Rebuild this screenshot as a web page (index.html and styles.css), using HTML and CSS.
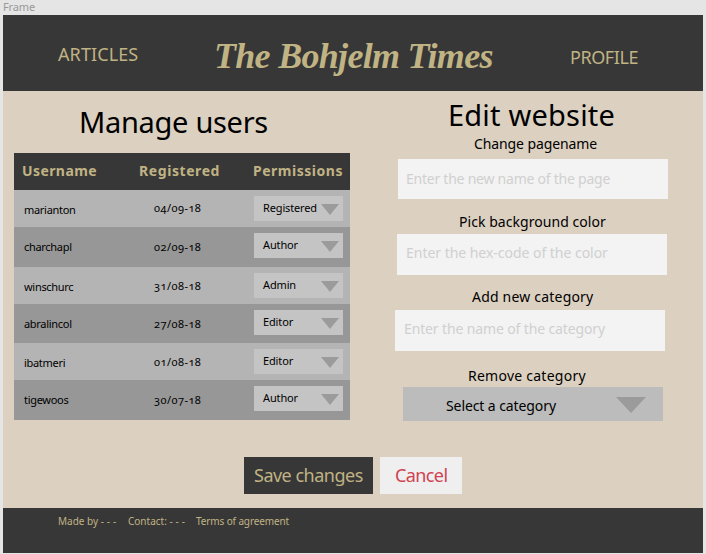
FILE: index.html
```
<!DOCTYPE html>
<html lang="en">
<head>
<meta charset="utf-8">
<title>The Bohjelm Times</title>
<link rel="stylesheet" href="styles.css">
</head>
<body>
<div class="frame-label">Frame</div>
<div class="frame">
  <header class="top">
    <a class="nav articles">ARTICLES</a>
    <div class="brand">The Bohjelm Times</div>
    <a class="nav profile">PROFILE</a>
  </header>
  <main>
    <div class="columns">
      <section class="users">
        <h1 class="users-title">Manage users</h1>
        <div class="thead"><span class="h-user">Username</span><span class="h-reg">Registered</span><span class="h-perm">Permissions</span></div>
        <div class="row r1"><span class="name">marianton</span><span class="date">04/09-18</span><div class="pick">Registered<i class="arrow"></i></div></div>
        <div class="row alt"><span class="name">charchapl</span><span class="date">02/09-18</span><div class="pick">Author<i class="arrow"></i></div></div>
        <div class="row r3"><span class="name">winschurc</span><span class="date">31/08-18</span><div class="pick">Admin<i class="arrow"></i></div></div>
        <div class="row alt r4"><span class="name">abralincol</span><span class="date">27/08-18</span><div class="pick">Editor<i class="arrow"></i></div></div>
        <div class="row r5"><span class="name">ibatmeri</span><span class="date">01/08-18</span><div class="pick">Editor<i class="arrow"></i></div></div>
        <div class="row alt"><span class="name">tigewoos</span><span class="date">30/07-18</span><div class="pick">Author<i class="arrow"></i></div></div>
      </section>
      <section class="site">
        <h1 class="site-title">Edit website</h1>
        <div class="label l1">Change pagename</div>
        <div class="field f1">Enter the new name of the page</div>
        <div class="label l2">Pick background color</div>
        <div class="field f2">Enter the hex-code of the color</div>
        <div class="label l3">Add new category</div>
        <div class="field f3">Enter the name of the category</div>
        <div class="label l4">Remove category</div>
        <div class="category">Select a category<i class="arrow big"></i></div>
      </section>
    </div>
    <div class="actions"><div class="btn save">Save changes</div><div class="btn cancel">Cancel</div></div>
  </main>
  <footer><span>Made by <span class="dashes">---</span></span><span>Contact: <span class="dashes">---</span></span><span class="terms">Terms of agreement</span></footer>
</div>
</body>
</html>
```
FILE: styles.css
```
* { box-sizing: border-box; }
body { margin: 0; height: 554px; overflow: hidden; background: #e5e5e5; font-family: "Noto Sans", "Open Sans", sans-serif; color: #000; white-space: nowrap; }
h1 { margin: 0; font-size: 29px; font-weight: 400; }

.frame-label { height: 15px; padding-left: 3px; font-size: 11px; line-height: 14px; letter-spacing: -0.14px; color: #999; }
.frame { width: 700px; margin-left: 3px; }

.top { display: grid; grid-template-columns: 156px 356px 1fr; align-items: start; height: 76px; padding-left: 55px; background: #373737; color: #c0b384; }
.nav { font-size: 18px; line-height: 24px; }
.articles { margin-top: 27px; letter-spacing: 0.1px; }
.profile { margin-top: 30px; letter-spacing: -0.43px; }
.brand { margin-top: 19px; font: italic bold 36px/44px "Liberation Serif", serif; letter-spacing: -0.7px; }

main { height: 417px; background: #dcd0c1; }
.columns { display: flex; height: 366px; }
.users { width: 336px; margin-left: 11px; }
.users-title { margin: 11px 0; padding-left: 65px; line-height: 40px; letter-spacing: -0.3px; }
.thead { display: grid; grid-template-columns: 117px 114px 1fr; height: 37px; padding-left: 8px; background: #373737; color: #c0b384; font-size: 14px; font-weight: 700; line-height: 36px; }
.h-user { letter-spacing: 0.41px; }
.h-reg { letter-spacing: 0.58px; }
.h-perm { letter-spacing: 0.52px; }
.row { display: grid; grid-template-columns: 130px 100px 89px; align-items: start; height: 37px; padding-left: 10px; background: #b4b4b4; font-size: 11px; letter-spacing: -0.3px; }
.row.alt { height: 40px; background: #979797; }
.row.r4 { height: 39px; }
.name, .date { padding-top: 2px; line-height: 36px; }
.date { font-variant-numeric: oldstyle-nums; letter-spacing: 0.45px; }
.r1 .date { padding-top: 0; }
.r3 .date, .r5 .date { padding-top: 1px; }
.pick { display: flex; justify-content: space-between; height: 25px; margin-top: 6px; padding: 0 4px 0 9px; background: #c4c4c4; line-height: 24px; letter-spacing: -0.14px; }
.arrow { flex: none; width: 18px; height: 11px; margin-top: 8px; background: #9b9b9b; clip-path: polygon(0 0, 100% 0, 50% 100%); }

.site { width: 273px; margin-left: 45px; padding-top: 4px; }
.site-title { height: 38px; padding-left: 53px; line-height: 40px; letter-spacing: 0.2px; }
.label { height: 20px; font-size: 14px; line-height: 22px; }
.l1 { padding-left: 79px; letter-spacing: -0.1px; }
.l2 { margin-top: 12px; padding-left: 64px; letter-spacing: 0.05px; }
.l3 { margin-top: 11px; padding-left: 77px; letter-spacing: 0.2px; }
.l4 { margin-top: 14px; padding-left: 73px; letter-spacing: 0.25px; }
.field { width: 270px; height: 41px; background: #f3f3f3; color: #d0d0d0; font-size: 14px; line-height: 37px; }
.f1 { height: 40px; margin: 6px 0 0 3px; padding-left: 8px; line-height: 39px; letter-spacing: -0.24px; }
.f2 { margin: 3px 0 0 2px; padding-left: 9px; letter-spacing: -0.03px; }
.f3 { margin-top: 4px; padding-left: 9px; letter-spacing: -0.13px; }
.category { display: flex; justify-content: space-between; width: 260px; height: 33.5px; margin: 2px 0 0 8px; padding: 0 17px 0 43px; background: #bcbcbc; font-size: 14px; line-height: 37px; letter-spacing: -0.09px; }
.arrow.big { width: 30px; height: 16px; margin-top: 10px; }

.actions { display: flex; gap: 7px; padding-left: 241px; }
.btn { height: 37px; font-size: 18px; line-height: 37px; }
.save { width: 129px; padding-left: 10px; background: #373737; color: #c0b384; letter-spacing: -0.5px; }
.cancel { width: 82px; padding-left: 15px; background: #efefef; color: #cf4350; letter-spacing: -0.6px; }

footer { display: grid; grid-template-columns: 70px 68px 1fr; height: 45px; padding-left: 55px; background: #373737; color: #c0b384; font-size: 10px; line-height: 27px; }
.dashes { letter-spacing: 2.9px; }
.terms { letter-spacing: -0.12px; }
```
